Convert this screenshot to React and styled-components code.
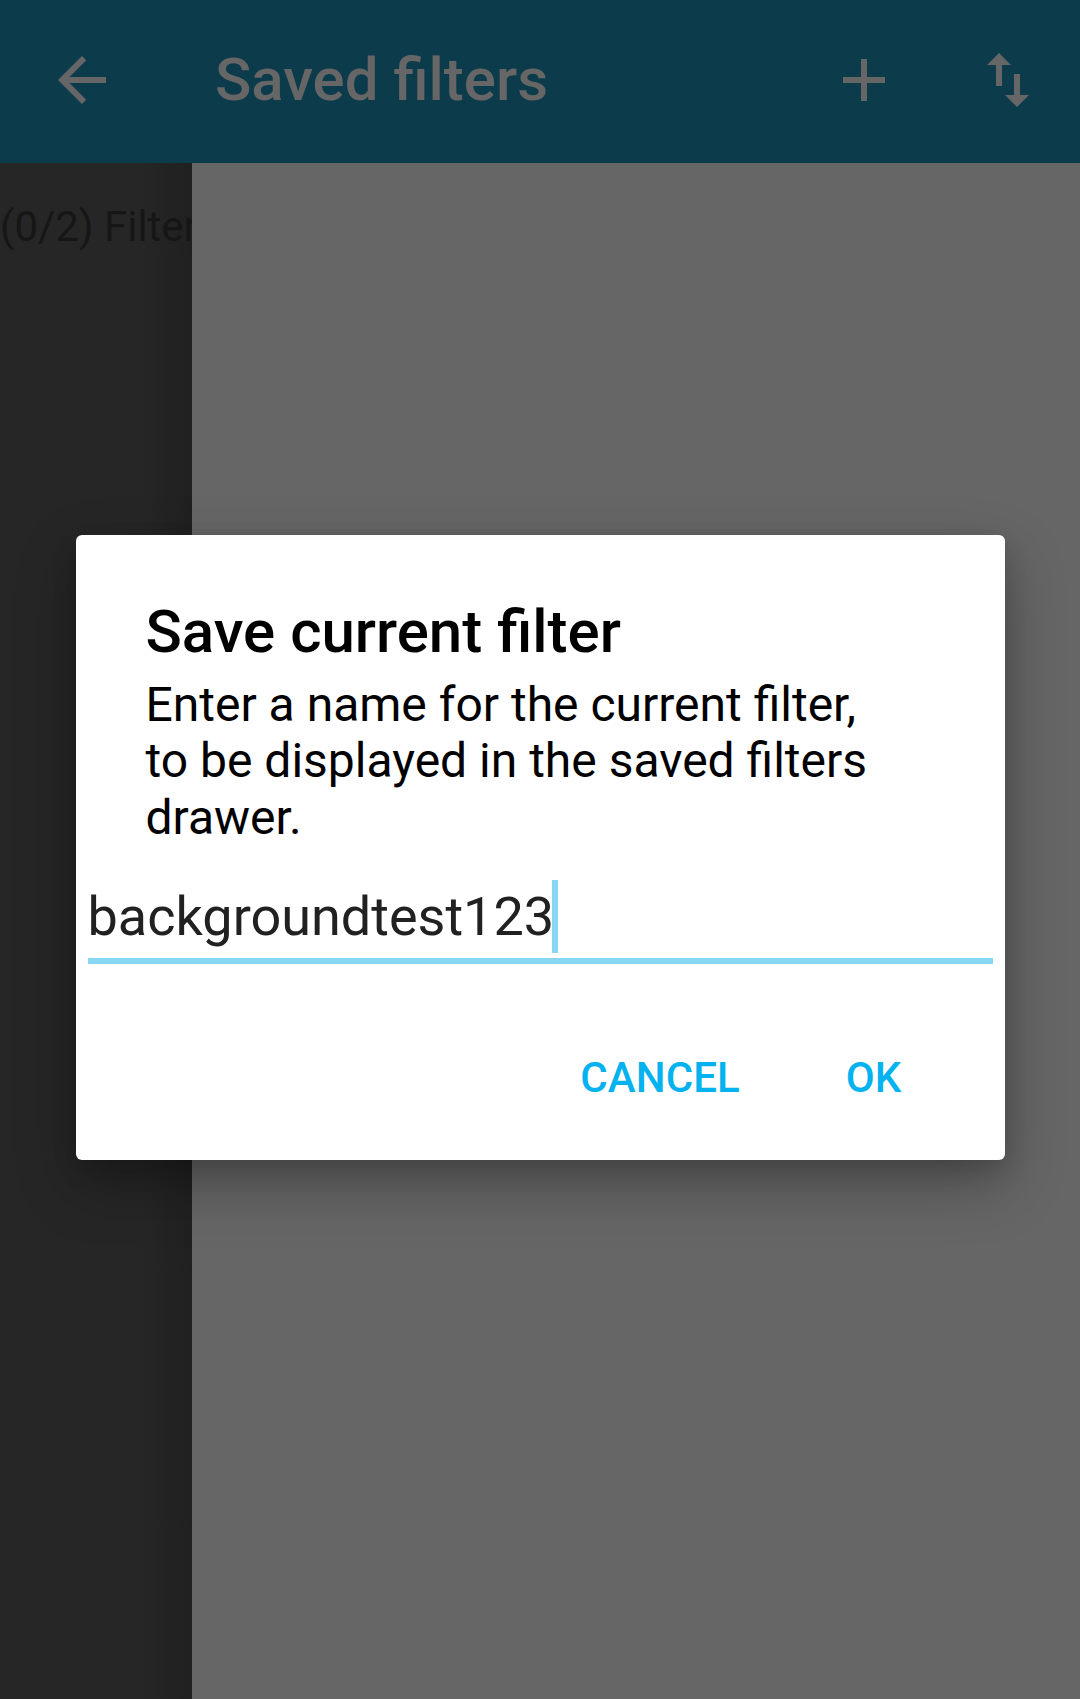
import React from "react";
import styled, { createGlobalStyle } from "styled-components";

const GlobalStyle = createGlobalStyle`
  html, body {
    margin: 0;
    padding: 0;
    height: 100%;
    background: #666666;
    font-family: Roboto, "Noto Sans", "Liberation Sans", sans-serif;
  }
  #root { height: 100%; }
  * { box-sizing: border-box; }
`;

const Screen = styled.div`
  display: flex;
  flex-direction: column;
  width: 1080px;
  height: 1699px;
  overflow: hidden;
  position: relative;
`;

const Toolbar = styled.header`
  flex: 0 0 163px;
  display: flex;
  align-items: center;
  padding: 0 36px 4px 46px;
  background: #0c3b4b;
`;

const IconButton = styled.div`
  width: 72px;
  height: 72px;
  flex: 0 0 72px;
  display: flex;
  align-items: center;
  justify-content: center;
  margin-left: ${(p) => p.$gap || 0}px;
  svg { width: 72px; height: 72px; display: block; }
`;

const Title = styled.h1`
  flex: 1;
  margin: 0 0 0 97px;
  font-size: 60px;
  line-height: 70px;
  font-weight: 500;
  color: #666666;
  white-space: nowrap;
`;

const Body = styled.main`
  flex: 1;
  display: flex;
`;

const Drawer = styled.aside`
  flex: 0 0 192px;
  overflow: hidden;
  padding-top: 40px;
  background: linear-gradient(to right, #262626 0%, #262626 74%, #202020 100%);
`;

const DrawerText = styled.div`
  font-size: 42px;
  line-height: 48px;
  color: #161616;
  white-space: nowrap;
`;

const Content = styled.section`
  flex: 1;
  background: #666666;
`;

const Overlay = styled.div`
  position: absolute;
  inset: 0;
  display: flex;
  align-items: center;
  justify-content: center;
  padding-bottom: 4px;
`;

const Dialog = styled.div`
  width: 929px;
  background: #ffffff;
  border-radius: 6px;
  padding: 64px 12px 58px 12px;
  box-shadow: 0 24px 60px rgba(0, 0, 0, 0.28), 0 10px 24px rgba(0, 0, 0, 0.14);
`;

const DialogTitle = styled.h2`
  margin: 0;
  padding: 0 58px;
  font-size: 60px;
  line-height: 66px;
  font-weight: 500;
  color: #000000;
`;

const Message = styled.p`
  margin: 12px 0 0 0;
  padding: 0 106px 0 58px;
  font-size: 48px;
  line-height: 56.3px;
  font-weight: 400;
  color: #000000;
`;

const Field = styled.div`
  margin-top: 34px;
  display: flex;
  flex-direction: column;
  gap: 5px;
`;

const FieldValue = styled.div`
  display: flex;
  align-items: center;
  font-size: 54px;
  line-height: 73px;
  color: #212121;
  white-space: nowrap;
`;

const Caret = styled.span`
  display: inline-block;
  width: 6px;
  height: 73px;
  margin-left: -2px;
  background: #87d7f3;
`;

const Underline = styled.div`
  height: 6px;
  background: #87d7f3;
`;

const Actions = styled.div`
  margin-top: 89px;
  display: flex;
  justify-content: flex-end;
  gap: 106px;
  padding-right: 91px;
`;

const TextButton = styled.button`
  border: 0;
  background: none;
  padding: 0;
  font-family: Roboto, "Noto Sans", "Liberation Sans", sans-serif;
  font-size: 42px;
  line-height: 49px;
  font-weight: 500;
  letter-spacing: 0.1px;
  color: #03b2ee;
  text-transform: uppercase;
`;

const ArrowBack = () => (
  <svg viewBox="0 0 24 24" fill="#666666">
    <path d="M20 11H7.83l5.59-5.59L12 4l-8 8 8 8 1.41-1.41L7.83 13H20v-2z" />
  </svg>
);

const Plus = () => (
  <svg viewBox="0 0 24 24" fill="#666666">
    <path d="M19 13h-6v6h-2v-6H5v-2h6V5h2v6h6v2z" />
  </svg>
);

const SwapVert = () => (
  <svg viewBox="0 0 24 24" fill="#666666">
    <path d="M16 17.01V10h-2v7.01h-3L15 21l4-3.99h-3zM9 3L5 6.99h3V14h2V6.99h3L9 3z" />
  </svg>
);

export default function App() {
  return (
    <>
      <GlobalStyle />
      <Screen>
        <Toolbar>
          <IconButton>
            <ArrowBack />
          </IconButton>
          <Title>Saved filters</Title>
          <IconButton>
            <Plus />
          </IconButton>
          <IconButton $gap={72}>
            <SwapVert />
          </IconButton>
        </Toolbar>
        <Body>
          <Drawer>
            <DrawerText>(0/2) Filter</DrawerText>
          </Drawer>
          <Content />
        </Body>
        <Overlay>
          <Dialog>
            <DialogTitle>Save current filter</DialogTitle>
            <Message>
              Enter a name for the current filter, to be displayed in the saved filters drawer.
            </Message>
            <Field>
              <FieldValue>
                backgroundtest123
                <Caret />
              </FieldValue>
              <Underline />
            </Field>
            <Actions>
              <TextButton>Cancel</TextButton>
              <TextButton>OK</TextButton>
            </Actions>
          </Dialog>
        </Overlay>
      </Screen>
    </>
  );
}
